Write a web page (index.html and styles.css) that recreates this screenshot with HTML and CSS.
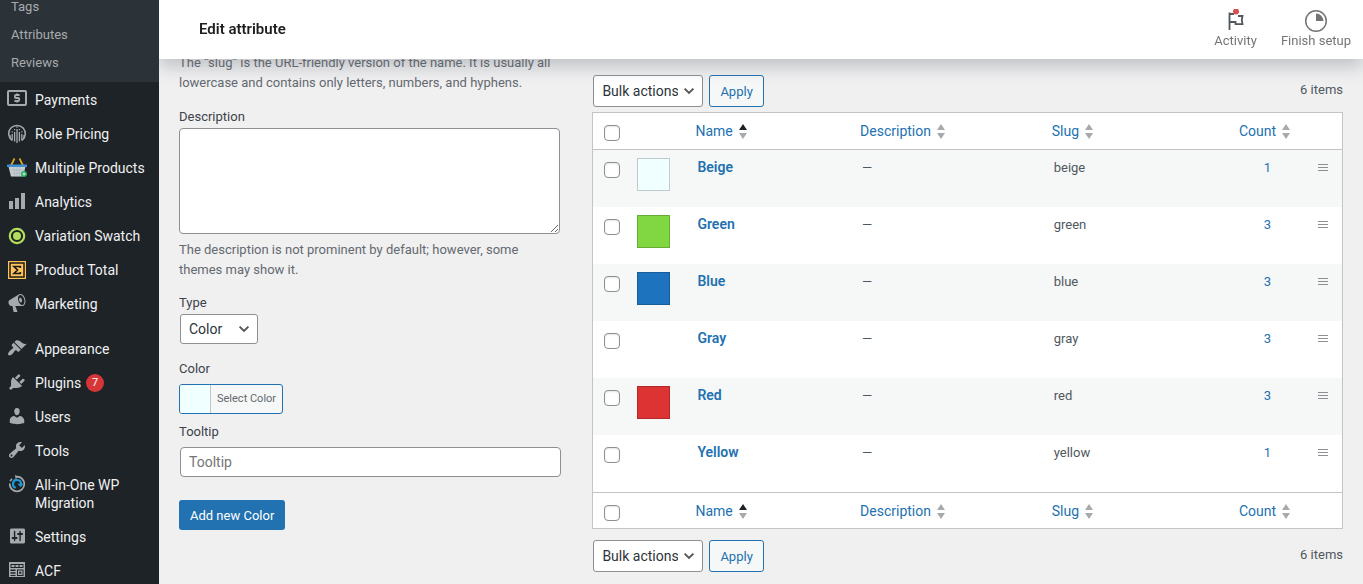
FILE: index.html
```html
<!DOCTYPE html>
<html lang="en">
  <head>
    <meta charset="utf-8">
    <title>Edit attribute</title>
    <link rel="stylesheet" href="styles.css">
  </head>
  <body>
    <nav class="sidebar">
      <ul class="submenu">
        <li><a href="#">Tags</a></li>
        <li><a href="#">Attributes</a></li>
        <li><a href="#">Reviews</a></li>
      </ul>
      <ul class="menu">
        <li>
          <a href="#">
            <svg class="icon" viewBox="0 0 20 20">
              <rect x="1" y="2" width="18" height="14" rx="1" fill="none" stroke="currentColor" stroke-width="2" />
              <path d="M12.600 6H8.900a1 1 0 0 0-1 1v1a1 1 0 0 0 1 1h2.300a1 1 0 0 1 1 1v1a1 1 0 0 1-1 1H7.400M10 4.400V6M10 12v1.600" fill="none" stroke="currentColor" stroke-width="1.800" />
            </svg>
            Payments
          </a>
        </li>
        <li>
          <a href="#">
            <svg class="icon" viewBox="0 0 20 20">
              <path d="M5 17.300a8.300 8.300 0 1 1 10 0" fill="none" stroke="currentColor" stroke-width="1.500" />
              <path d="M10 6v14.500M7.600 9v9.500M12.400 9v9.500M5.200 11v6.500M14.800 11v6.500M3 12v3.500M17 12v3.500" fill="none" stroke="currentColor" stroke-width="1.300" />
              <path d="M7.600 6v1.200M12.400 6v1.200M5.200 8.200v1.200M14.800 8.200v1.200M10 3.500v1.200" stroke="currentColor" stroke-width="1.200" />
            </svg>
            Role Pricing
          </a>
        </li>
        <li>
          <a href="#">
            <svg class="icon" viewBox="0 0 20 20">
              <path d="M4 8.500l3.500-7M16 8.500l-3.500-7" stroke="#e0a91b" stroke-width="1.700" />
              <path d="M1.500 9.500h17L16 19.500H4z" fill="#c9d0d5" />
              <path d="M2.500 13h15M3.500 16.200h13M7 10l.8 9.500M13 10l-.8 9.500M10 10v9.500" stroke="#a9b3ba" stroke-width=".7" />
              <rect y="7.500" width="20" height="2.500" rx=".5" fill="#3d8fd1" />
              <circle cx="17" cy="17" r="3" fill="#27ae60" />
              <path d="M17 15.500v3M15.500 17h3" stroke="#d9f5e4" stroke-width="1" />
            </svg>
            Multiple Products
          </a>
        </li>
        <li>
          <a href="#">
            <svg class="icon" viewBox="0 0 20 20">
              <path d="M2 10h4v8H2zM8 7h4v11H8zM14 2h4v16h-4z" fill="currentColor" />
            </svg>
            Analytics
          </a>
        </li>
        <li>
          <a href="#">
            <svg class="icon" viewBox="0 0 20 20">
              <circle cx="10" cy="11" r="7.200" fill="none" stroke="#b5dc5a" stroke-width="2.200" />
              <circle cx="10" cy="11" r="4" fill="#b5dc5a" />
            </svg>
            Variation Swatch
          </a>
        </li>
        <li>
          <a href="#">
            <svg class="icon" viewBox="0 0 20 20">
              <rect x="1" y="2" width="18" height="18" fill="#ffc35b" />
              <rect x="3" y="4" width="14" height="14" fill="none" stroke="#1b1a17" stroke-width="1.500" />
              <path d="M13.300 9V7.500H7l3.500 3.500L7 14.500h6.300V13" fill="none" stroke="#1b1a17" stroke-width="1.700" />
            </svg>
            Product Total
          </a>
        </li>
        <li>
          <a href="#">
            <svg class="icon" viewBox="0 0 20 20">
              <path fill="currentColor" fill-rule="evenodd" d="M18.150 5.940c.46 1.620.38 3.220-.02 4.480-.42 1.280-1.260 2.180-2.300 2.480-.16.06-.26.06-.4.06-.06.02-.12.02-.18.02-.06.02-.14.02-.22.02h-6.800l2.220 5.500c.02.14-.06.26-.14.34-.08.1-.24.16-.34.16H6.950c-.1 0-.26-.06-.34-.16-.08-.08-.16-.2-.14-.34l-1-5.500H4.250l-.02-.02c-.5.06-1.080-.18-1.540-.62s-.88-1.080-1.060-1.880c-.24-.8-.2-1.560-.02-2.200.18-.62.58-1.080 1.060-1.300l.02-.02 9-5.400c.1-.06.18-.1.24-.16.06-.04.14-.08.24-.12.16-.08.28-.12.5-.18 1.040-.3 2.240.1 3.220.98s1.840 2.240 2.260 3.860zm-2.580 5.980h-.02c.4-.1.74-.34 1.040-.7.58-.7.86-1.760.86-3.040 0-.64-.1-1.300-.28-1.980-.34-1.360-1.020-2.500-1.780-3.240s-1.680-1.100-2.460-.88c-.82.22-1.400.96-1.700 2-.32 1.040-.28 2.360.06 3.720.38 1.360 1 2.500 1.800 3.240.78.74 1.620 1.100 2.480.88zm-2.540-7.080c.22-.04.42-.02.62.04.38.16.76.48 1.020 1s.42 1.200.42 1.780c0 .3-.04.56-.12.8-.18.48-.44.84-.86.94-.34.1-.8-.06-1.140-.4s-.64-.86-.78-1.500c-.18-.62-.12-1.240.02-1.720s.48-.84.82-.94z" />
            </svg>
            Marketing
          </a>
        </li>
        <li class="separator"></li>
        <li>
          <a href="#">
            <svg class="icon" viewBox="0 0 20 20">
              <path fill="currentColor" d="M14.480 11.060L7.410 3.990l1.500-1.500c.5-.56 2.300-.47 3.510.32 1.210.8 1.430 1.280 2.910 2.100 1.180.64 2.450 1.260 4.450.85zm-.71.71L6.700 4.700 4.930 6.470c-.39.39-.39 1.020 0 1.410l1.060 1.060c.39.39.39 1.030 0 1.420-.6.6-1.430 1.110-2.210 1.690-.35.26-.7.53-1.010.84C1.430 14.230.4 16.080 1.400 17.070c.99 1 2.840-.03 4.180-1.360.31-.31.58-.66.85-1.020.57-.78 1.080-1.610 1.690-2.210.39-.39 1.020-.39 1.410 0l1.060 1.060c.39.39 1.020.39 1.410 0z" />
            </svg>
            Appearance
          </a>
        </li>
        <li>
          <a href="#">
            <svg class="icon" viewBox="0 0 20 20">
              <path fill="currentColor" d="M13.110 4.360L9.870 7.600 8 5.730l3.240-3.240c.35-.34 1.050-.2 1.560.32.52.51.66 1.210.31 1.550zm-8 1.770l.91-1.120 9.010 9.010-1.190.84c-.71.71-2.630 1.160-3.820 1.160H6.140L4.900 17.260c-.59.59-1.540.59-2.120 0-.59-.58-.59-1.530 0-2.120l1.240-1.240v-3.880c0-1.130.4-3.190 1.090-3.890zm7.260 3.970l3.240-3.240c.34-.35 1.040-.21 1.550.31.52.51.66 1.210.31 1.550l-3.240 3.250z" />
            </svg>
            Plugins <span class="count-badge">7</span>
          </a>
        </li>
        <li>
          <a href="#">
            <svg class="icon" viewBox="0 0 20 20">
              <path fill="currentColor" d="M10 9.250c-2.270 0-2.730-3.440-2.730-3.440C7 4.020 7.820 2 9.970 2c2.160 0 2.980 2.020 2.710 3.810 0 0-.41 3.440-2.680 3.440zm0 2.570L12.720 10c2.390 0 4.520 2.330 4.520 4.530v2.490s-3.650 1.130-7.240 1.130c-3.650 0-7.240-1.130-7.240-1.130v-2.490c0-2.250 1.940-4.480 4.470-4.480z" />
            </svg>
            Users
          </a>
        </li>
        <li>
          <a href="#">
            <svg class="icon" viewBox="0 0 20 20">
              <path fill="currentColor" d="M16.680 9.770c-1.340 1.340-3.300 1.670-4.950.99l-5.410 6.520c-.99.99-2.590.99-3.580 0s-.99-2.590 0-3.570l6.520-5.420c-.68-1.650-.35-3.610.99-4.950 1.280-1.280 3.120-1.620 4.720-1.060l-2.890 2.890 2.820 2.820 2.860-2.870c.53 1.580.18 3.390-1.080 4.650zM3.810 16.210c.4.39 1.040.39 1.430 0 .4-.4.4-1.040 0-1.430-.39-.4-1.030-.4-1.430 0-.39.39-.39 1.030 0 1.430z" />
            </svg>
            Tools
          </a>
        </li>
        <li>
          <a href="#">
            <svg class="icon" viewBox="0 0 20 20">
              <path d="M10 2.700A7.300 7.300 0 1 1 2.700 9.500" fill="none" stroke="currentColor" stroke-width="1.700" />
              <path d="M3.200 7.300A7.300 7.300 0 0 1 5 4.800" fill="none" stroke="currentColor" stroke-width="1.600" />
              <path d="M8 .8l3.200 1.900L8.600 5z" fill="currentColor" />
              <path d="M8.800 13.800A4 4 0 1 1 14 10" fill="none" stroke="#1c9ad6" stroke-width="2.200" />
              <path d="M10.500 9.800h6l-2.900 3.500z" fill="#1c9ad6" />
            </svg>
            <span>All-in-One WP Migration</span>
          </a>
        </li>
        <li>
          <a href="#">
            <svg class="icon" viewBox="0 0 20 20">
              <path fill="currentColor" fill-rule="evenodd" d="M18 16V4c0-1.100-.9-1.500-1.500-1.500h-12C3.400 2.500 3 3.400 3 4v12c0 1.100.9 1.500 1.500 1.500h12c1.100 0 1.500-.9 1.500-1.500zM8.300 11h1.200c.55 0 1 .45 1 1s-.45 1-1 1H8.300v1.500c0 .4-.3.700-.7.700s-.7-.3-.7-.7V13H5.700c-.55 0-1-.45-1-1s.45-1 1-1h1.200V5.500c0-.4.300-.7.700-.7s.7.300.7.700zm5.500-4h1.200c.55 0 1 .45 1 1s-.45 1-1 1h-1.200v5.500c0 .4-.3.700-.7.700s-.7-.3-.7-.7V9h-1.200c-.55 0-1-.45-1-1s.45-1 1-1h1.200V5.500c0-.4.300-.7.700-.7s.7.300.7.700z" />
            </svg>
            Settings
          </a>
        </li>
        <li>
          <a href="#">
            <svg class="icon" viewBox="0 0 20 20">
              <path fill="currentColor" fill-rule="evenodd" d="M2 2h16v15H2zM3.500 4v4h13V4zM3.500 9.500V11h5V9.500zm0 2.800v1.400h5v-1.400zm0 2.700v1h5v-1zm6.500-5.500V16h6.500V9.500z" />
              <path fill="currentColor" d="M4.500 5h3v2h-3zM8.500 5h3v2h-3zM12.500 5h3v2h-3zM11 10.500h4.500V15H11z" />
              <path fill="#1d2327" d="M12.200 11.700h2.100v2.100h-2.100z" />
            </svg>
            ACF
          </a>
        </li>
      </ul>
    </nav>

    <header class="topbar">
      <h1>Edit attribute</h1>
      <div class="topbar-actions">
        <button type="button" class="topbar-button">
          <svg width="24" height="24" viewBox="0 0 24 24">
            <path d="M5.500 3.500V21M5.500 5H10M5.500 13h6v2.200h7L17.800 11l.7-4H14" fill="none" stroke="#50575e" stroke-width="1.800" />
            <circle cx="12" cy="2.500" r="3" fill="#d94f4f" />
          </svg>
          Activity
        </button>
        <button type="button" class="topbar-button">
          <svg width="24" height="24" viewBox="0 0 24 24">
            <circle cx="12" cy="12" r="10.300" fill="#fff" stroke="#757575" stroke-width="1.500" />
            <path d="M12 12V4.500a7.500 7.500 0 0 1 7.500 7.500z" fill="#757575" />
          </svg>
          Finish setup
        </button>
      </div>
    </header>

    <main class="content">
      <form class="term-form">
        <p class="hint slug-hint">The “slug” is the URL-friendly version of the name. It is usually all lowercase and contains only letters, numbers, and hyphens.</p>

        <div class="form-field">
          <label for="description">Description</label>
          <textarea id="description" name="description"></textarea>
          <p class="hint">The description is not prominent by default; however, some themes may show it.</p>
        </div>

        <div class="form-field type-field">
          <label for="type">Type</label>
          <select id="type" name="type">
            <option>Color</option>
          </select>
        </div>

        <div class="form-field color-field">
          <label for="color">Color</label>
          <button type="button" id="color" class="color-button">
            <span class="color-preview"></span>
            <span class="color-text">Select Color</span>
          </button>
        </div>

        <div class="form-field tooltip-field">
          <label for="tooltip">Tooltip</label>
          <input type="text" id="tooltip" name="tooltip" placeholder="Tooltip">
        </div>

        <button type="submit" class="button-primary">Add new Color</button>
      </form>

      <section class="term-list">
        <div class="tablenav">
          <select aria-label="Bulk actions">
            <option>Bulk actions</option>
          </select>
          <button type="button" class="button">Apply</button>
          <span class="items-count">6 items</span>
        </div>

        <table class="terms">
          <colgroup>
            <col class="col-check">
            <col class="col-thumb">
            <col class="col-name">
            <col class="col-description">
            <col>
            <col class="col-count">
            <col class="col-handle">
          </colgroup>
          <thead>
            <tr>
              <th class="check"><input type="checkbox" aria-label="Select all"></th>
              <th></th>
              <th><a href="#">Name <svg class="sort asc" viewBox="0 0 8 15"><path d="M4 0l4 6H0z" /><path d="M4 15l4-6H0z" /></svg></a></th>
              <th><a href="#">Description <svg class="sort" viewBox="0 0 8 15"><path d="M4 0l4 6H0z" /><path d="M4 15l4-6H0z" /></svg></a></th>
              <th><a href="#">Slug <svg class="sort" viewBox="0 0 8 15"><path d="M4 0l4 6H0z" /><path d="M4 15l4-6H0z" /></svg></a></th>
              <th><a href="#">Count <svg class="sort" viewBox="0 0 8 15"><path d="M4 0l4 6H0z" /><path d="M4 15l4-6H0z" /></svg></a></th>
              <th></th>
            </tr>
          </thead>
          <tbody>
            <tr>
              <td class="check"><input type="checkbox" aria-label="Select Beige"></td>
              <td class="thumb"><div class="swatch beige"></div></td>
              <td><a href="#" class="row-title">Beige</a></td>
              <td>—</td>
              <td>beige</td>
              <td class="count"><a href="#">1</a></td>
              <td class="handle"><svg width="10" height="8" viewBox="0 0 10 8"><path d="M0 .5h10M0 3.500h10M0 6.500h10" /></svg></td>
            </tr>
            <tr>
              <td class="check"><input type="checkbox" aria-label="Select Green"></td>
              <td class="thumb"><div class="swatch green"></div></td>
              <td><a href="#" class="row-title">Green</a></td>
              <td>—</td>
              <td>green</td>
              <td class="count"><a href="#">3</a></td>
              <td class="handle"><svg width="10" height="8" viewBox="0 0 10 8"><path d="M0 .5h10M0 3.500h10M0 6.500h10" /></svg></td>
            </tr>
            <tr>
              <td class="check"><input type="checkbox" aria-label="Select Blue"></td>
              <td class="thumb"><div class="swatch blue"></div></td>
              <td><a href="#" class="row-title">Blue</a></td>
              <td>—</td>
              <td>blue</td>
              <td class="count"><a href="#">3</a></td>
              <td class="handle"><svg width="10" height="8" viewBox="0 0 10 8"><path d="M0 .5h10M0 3.500h10M0 6.500h10" /></svg></td>
            </tr>
            <tr>
              <td class="check"><input type="checkbox" aria-label="Select Gray"></td>
              <td class="thumb"></td>
              <td><a href="#" class="row-title">Gray</a></td>
              <td>—</td>
              <td>gray</td>
              <td class="count"><a href="#">3</a></td>
              <td class="handle"><svg width="10" height="8" viewBox="0 0 10 8"><path d="M0 .5h10M0 3.500h10M0 6.500h10" /></svg></td>
            </tr>
            <tr>
              <td class="check"><input type="checkbox" aria-label="Select Red"></td>
              <td class="thumb"><div class="swatch red"></div></td>
              <td><a href="#" class="row-title">Red</a></td>
              <td>—</td>
              <td>red</td>
              <td class="count"><a href="#">3</a></td>
              <td class="handle"><svg width="10" height="8" viewBox="0 0 10 8"><path d="M0 .5h10M0 3.500h10M0 6.500h10" /></svg></td>
            </tr>
            <tr>
              <td class="check"><input type="checkbox" aria-label="Select Yellow"></td>
              <td class="thumb"></td>
              <td><a href="#" class="row-title">Yellow</a></td>
              <td>—</td>
              <td>yellow</td>
              <td class="count"><a href="#">1</a></td>
              <td class="handle"><svg width="10" height="8" viewBox="0 0 10 8"><path d="M0 .5h10M0 3.500h10M0 6.500h10" /></svg></td>
            </tr>
          </tbody>
          <tfoot>
            <tr>
              <th class="check"><input type="checkbox" aria-label="Select all"></th>
              <th></th>
              <th><a href="#">Name <svg class="sort asc" viewBox="0 0 8 15"><path d="M4 0l4 6H0z" /><path d="M4 15l4-6H0z" /></svg></a></th>
              <th><a href="#">Description <svg class="sort" viewBox="0 0 8 15"><path d="M4 0l4 6H0z" /><path d="M4 15l4-6H0z" /></svg></a></th>
              <th><a href="#">Slug <svg class="sort" viewBox="0 0 8 15"><path d="M4 0l4 6H0z" /><path d="M4 15l4-6H0z" /></svg></a></th>
              <th><a href="#">Count <svg class="sort" viewBox="0 0 8 15"><path d="M4 0l4 6H0z" /><path d="M4 15l4-6H0z" /></svg></a></th>
              <th></th>
            </tr>
          </tfoot>
        </table>

        <div class="tablenav bottom">
          <select aria-label="Bulk actions">
            <option>Bulk actions</option>
          </select>
          <button type="button" class="button">Apply</button>
          <span class="items-count">6 items</span>
        </div>
      </section>
    </main>
  </body>
</html>
```

FILE: styles.css
```css
* {
  box-sizing: border-box;
}

body {
  display: flex;
  height: 100vh;
  margin: 0;
  overflow: hidden;
  background: #f0f0f1;
  color: #3c434a;
  font-family: Roboto, "Noto Sans", sans-serif;
  font-size: 13px;
  line-height: 20px;
}

button,
input,
select,
textarea {
  margin: 0;
  font-family: inherit;
}

a {
  color: #2271b1;
  text-decoration: none;
}

/* admin menu */

.sidebar {
  position: relative;
  z-index: 2;
  flex: 0 0 159px;
  background: #1d2327;
}

.sidebar ul {
  margin: 0;
  padding: 0;
  list-style: none;
}

/* the menu is scrolled, so its first entry is cut off */
.sidebar .submenu {
  margin-top: -7px;
  padding-bottom: 5px;
  background: #2c3338;
}

.sidebar .menu {
  padding-top: 1px;
}

.submenu a {
  display: block;
  padding: 4px 11px;
  color: #a7aaad;
}

.menu a {
  display: flex;
  gap: 8px;
  padding: 8px 7px;
  color: #f0f0f1;
  font-size: 14px;
  line-height: 18px;
}

.icon {
  flex: none;
  width: 20px;
  height: 20px;
  margin-top: -2px;
  color: #a7aaad;
}

.separator {
  height: 11px;
}

.count-badge {
  width: 18px;
  height: 18px;
  margin-left: -3px;
  border-radius: 9px;
  background: #d63638;
  color: #fff;
  font-size: 11px;
  text-align: center;
}

/* top bar */

.topbar {
  position: fixed;
  top: 0;
  right: 0;
  left: 159px;
  z-index: 1;
  display: flex;
  align-items: center;
  justify-content: space-between;
  height: 59px;
  padding: 0 12px 1px 40px;
  background: #fff;
  box-shadow: 0 8px 16px 0 rgba(85, 93, 102, 0.3);
}

.topbar h1 {
  margin: 0;
  color: #1e1e1e;
  font-size: 15px;
  font-weight: 600;
}

.topbar-actions {
  display: flex;
  gap: 24px;
}

.topbar-button {
  display: flex;
  flex-direction: column;
  align-items: center;
  padding: 0;
  border: 0;
  background: none;
  color: #757575;
  font-size: 13px;
  line-height: 16px;
}

/* form */

.content {
  display: flex;
  flex: 1;
  align-items: flex-start;
  padding: 53px 20px 0;
}

.term-form {
  flex: 0 0 35%;
  padding-right: 26px;
}

.hint {
  margin: 0;
  color: #646970;
}

.form-field label {
  display: block;
}

.form-field textarea,
.form-field input {
  display: block;
  width: 100%;
  border: 1px solid #8c8f94;
  border-radius: 4px;
  background: #fff;
  color: #2c3338;
  font-size: 14px;
}

.form-field textarea {
  height: 106px;
  margin: 1px 0 6px;
}

.slug-hint {
  margin-bottom: 14px;
}

.form-field input {
  height: 30px;
  margin: 5px 1px 23px;
  padding: 0 8px;
}

.form-field input::placeholder {
  color: #757575;
}

.type-field {
  margin-top: 13px;
}

.color-field {
  margin-top: 15px;
}

.tooltip-field {
  margin-top: 8px;
}

select {
  height: 30px;
  padding: 0 24px 0 8px;
  border: 1px solid #8c8f94;
  border-radius: 3px;
  background: #fff url("data:image/svg+xml,%3Csvg xmlns='http://www.w3.org/2000/svg' viewBox='0 0 20 20'%3E%3Cpath d='M4.500 7l5.500 5.500L15.500 7' fill='none' stroke='%23555' stroke-width='2.400'/%3E%3C/svg%3E") no-repeat right 5px center / 16px 16px;
  color: #2c3338;
  font-size: 14px;
  appearance: none;
}

.type-field select {
  display: block;
  width: 78px;
  margin: 1px 1px 0;
}

.color-button {
  display: flex;
  height: 30px;
  margin-top: 5px;
  padding: 0;
  overflow: hidden;
  border: 1px solid #2271b1;
  border-radius: 3px;
  background: #f6f7f7;
}

.color-preview {
  width: 30px;
  background: #f0ffff;
}

.color-text {
  padding: 0 6px;
  border-left: 1px solid #c3c4c7;
  color: #646970;
  font-size: 11px;
  line-height: 28px;
}

.button-primary {
  height: 30px;
  padding: 0 11px;
  border: 0;
  border-radius: 3px;
  background: #2271b1;
  color: #fff;
  font-size: 13px;
}

/* list of terms */

.term-list {
  flex: 1;
  padding: 22px 0 0 6px;
}

.tablenav {
  display: flex;
  align-items: center;
  gap: 6px;
  margin: 0 0 5px 1px;
}

.tablenav.bottom {
  margin-top: 11px;
}

.tablenav select {
  width: 110px;
  height: 32px;
}

.button {
  height: 32px;
  padding: 0 10px;
  border: 1px solid #2271b1;
  border-radius: 3px;
  background: #f6f7f7;
  color: #2271b1;
  font-size: 13px;
}

.items-count {
  margin-left: auto;
  padding-bottom: 2px;
  color: #50575e;
}

.terms {
  width: 100%;
  border: 1px solid #c3c4c7;
  border-spacing: 0;
  background: #fff;
  table-layout: fixed;
}

.col-check {
  width: 36px;
}

.col-thumb {
  width: 58px;
}

.col-name {
  width: 22%;
}

.col-description {
  width: 25.6%;
}

.col-count {
  width: 73px;
}

.col-handle {
  width: 38px;
}

.terms th {
  padding: 8px;
  font-size: 14px;
  font-weight: 400;
  text-align: left;
}

.terms thead th {
  border-bottom: 1px solid #c3c4c7;
}

.terms tfoot th {
  padding-bottom: 7px;
  border-top: 1px solid #c3c4c7;
}

.terms th a {
  display: flex;
  align-items: center;
  gap: 6px;
}

.terms td {
  height: 57px;
  padding: 8px 10px;
  color: #50575e;
  vertical-align: top;
}

.terms tbody tr:nth-child(odd) {
  background: #f6f7f7;
}

.terms .check {
  padding: 12px 0 0 11px;
  vertical-align: top;
}

.check input {
  display: block;
  width: 16px;
  height: 16px;
  border: 1px solid #8c8f94;
  border-radius: 4px;
  background: #fff;
  box-shadow: inset 0 1px 2px rgba(0, 0, 0, 0.1);
  appearance: none;
}

.terms .thumb {
  padding: 8px;
}

.swatch {
  width: 33px;
  height: 33px;
  border: 1px solid rgba(0, 0, 0, 0.2);
}

.beige {
  background: #f0ffff;
}

.green {
  background: #81d742;
}

.blue {
  background: #1e73be;
}

.red {
  background: #dd3333;
}

.row-title {
  display: block;
  font-size: 14px;
  font-weight: 600;
  line-height: 18px;
}

.terms .count {
  text-align: center;
}

.terms .handle {
  text-align: center;
}

.handle path {
  fill: none;
  stroke: #8c8f94;
}

.sort {
  width: 8px;
  height: 15px;
  fill: #a7aaad;
}

.sort.asc path:first-child {
  fill: #1d2327;
}
```
